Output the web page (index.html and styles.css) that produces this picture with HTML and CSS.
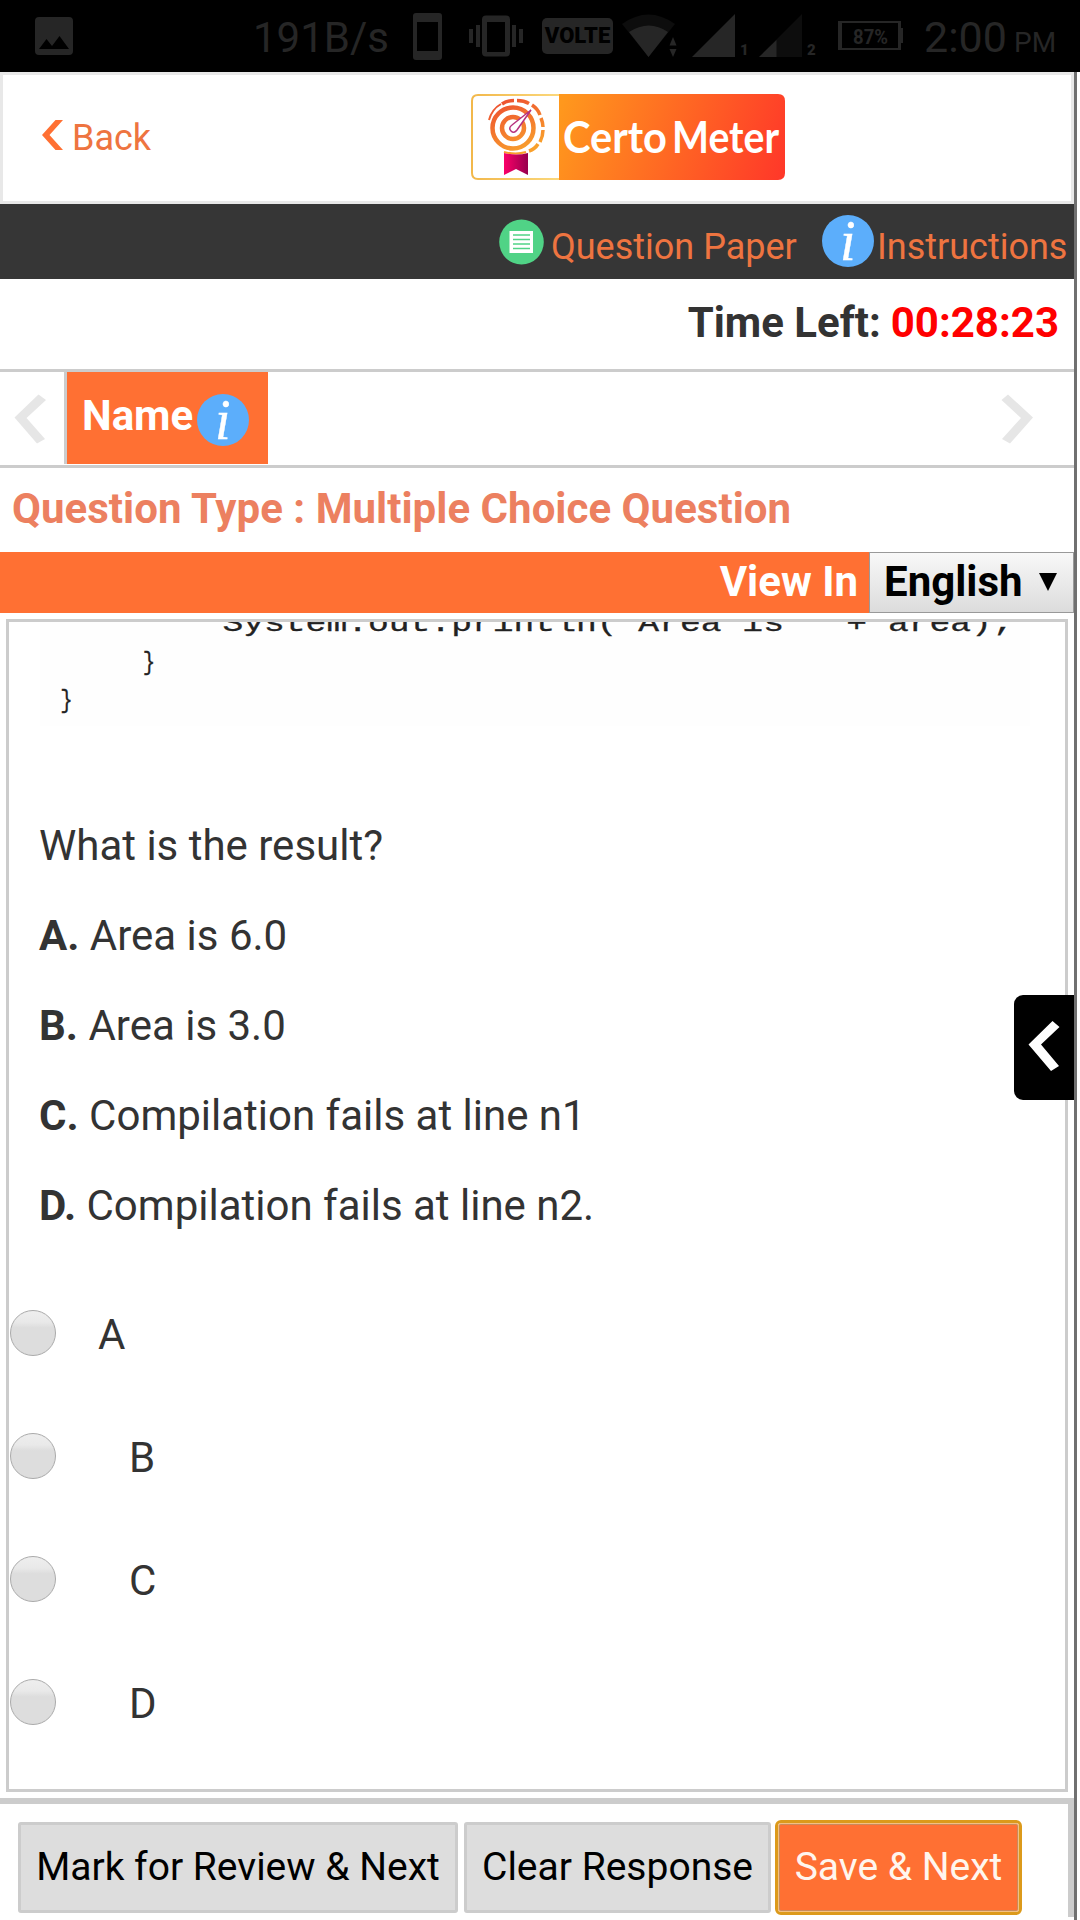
FILE: index.html
```html
<!DOCTYPE html>
<html lang="en">
<head>
<meta charset="utf-8">
<title>Certo Meter</title>
<link rel="stylesheet" href="styles.css">
</head>
<body>
<div class="status">
  <svg class="st-image" width="38" height="38" viewBox="35 17 38 38"><path fill="#262626" fill-rule="evenodd" d="M39 17h30q4 0 4 4v30q0 4-4 4H39q-4 0-4-4V21q0-4 4-4zM39 49h30L59.500 36l-7.500 10-5.500-7z"/></svg>
  <span class="st-speed">191B/s</span>
  <svg class="st-phone" width="30" height="48" viewBox="413 13 30 48"><path fill="#262626" fill-rule="evenodd" d="M416 13h23q3 0 3 3v41q0 3-3 3h-23q-3 0-3-3V16q0-3 3-3zM417 22v29h21V22z"/></svg>
  <svg class="st-vibrate" width="54" height="42" viewBox="469 15 54 42"><path fill="#262626" fill-rule="evenodd" d="M486 15.500h20q4 0 4 4v33q0 4-4 4h-20q-4 0-4-4v-33q0-4 4-4zM487 22v30h18V22zM469 29h4v14h-4zM476 25h4v22h-4zM512 25h4v22h-4zM519 29h4v14h-4z"/></svg>
  <span class="st-volte">VOLTE</span>
  <svg class="st-wifi" width="55" height="44" viewBox="622 14 55 44"><path fill="#0d0d0d" d="M622 24q26.500-19 53 0l-26.500 33z"/><path fill="#262626" d="M629 32q20-13 39 0l-19.500 25zM673 37l3.500 8.500h-7zM673 57l3.500-8h-7z"/></svg>
  <svg class="st-sig" width="43" height="44" viewBox="692 14 43 44"><path fill="#262626" d="M692 57L735 14v43z"/></svg>
  <span class="st-sim">1</span>
  <svg class="st-sig second" width="43" height="44" viewBox="759 14 43 44"><path fill="#0d0d0d" d="M759 57L802 14v43z"/><path fill="#262626" d="M759 57l17.500-17v17z"/></svg>
  <span class="st-sim">2</span>
  <svg class="st-battery" width="66" height="30" viewBox="838 21 66 30"><path fill="none" stroke="#262626" stroke-width="2" d="M839 22h61v27h-61z"/><path fill="#262626" d="M839 22h3v27h-3zM898 22h3v27h-3zM901 28h2v15h-2z"/><text x="853" y="44" font-size="21" textLength="35" lengthAdjust="spacingAndGlyphs" class="level">87%</text></svg>
  <span class="st-time">2:00</span><span class="st-pm">PM</span>
</div>
<div class="page">
  <header class="header">
    <a class="back"><svg width="22" height="32" viewBox="42 120 22 32"><path fill="#ff7033" d="M42 135l13.500-15H63L49.500 135 63 150h-7.500z"/></svg><span>Back</span></a>
    <svg class="logo" width="314" height="86" viewBox="471 94 314 86">
      <defs>
        <linearGradient id="brand" gradientUnits="userSpaceOnUse" x1="559" y1="110" x2="780" y2="185"><stop offset="0" stop-color="#ff981d"/><stop offset="1" stop-color="#ff3829"/></linearGradient>
        <linearGradient id="edge" x1="0" y1="0" x2="1" y2="0"><stop offset="0" stop-color="#f2b84b"/><stop offset="1" stop-color="#fbd87c"/></linearGradient>
        <linearGradient id="ring" gradientUnits="userSpaceOnUse" x1="500" y1="105" x2="522" y2="152"><stop offset="0" stop-color="#ee5530"/><stop offset="1" stop-color="#f9a02c"/></linearGradient>
        <linearGradient id="ribbon"><stop offset="0" stop-color="#fb0068"/><stop offset="1" stop-color="#97004e"/></linearGradient>
      </defs>
      <path fill="#fff" stroke="url(#edge)" stroke-width="2" d="M560 95h-82q-6 0-6 6v72q0 6 6 6h82z"/>
      <path fill="url(#brand)" d="M559 94h219q7 0 7 7v72q0 7-7 7H559z"/>
      <g fill="none" stroke="url(#ring)">
        <circle cx="513" cy="128" r="20.500" stroke-width="4.500"/>
        <circle cx="513" cy="128" r="11" stroke-width="4.500"/>
        <path stroke-width="2" d="M489 120q3-11 12-16"/>
        <path stroke-width="3.500" d="M502 104q5-3.500 12-3.500M517 100.500q7 0 12 3M532 105q6 4 8 10M541 118q2 5 2 9M543 130q0 6-3 12M538 144q-3 5-9 7"/>
        <path stroke-width="2" d="M526 152q-10 3-22 0"/>
      </g>
      <path fill="#fff" stroke="#b6327f" stroke-width="1.500" d="M531 110l-14 20q-3 4-6 1t1-6z"/>
      <path fill="url(#ribbon)" d="M504 153q12 3 24 0v22l-12-6-12 6z"/>
      <g class="wordmark"><text x="563" y="153" textLength="104" lengthAdjust="spacingAndGlyphs">Certo</text><text x="672" y="153" textLength="107" lengthAdjust="spacingAndGlyphs">Meter</text></g>
    </svg>
  </header>
  <nav class="toolbar">
    <svg class="paper-icon" width="45" height="46" viewBox="0 0 45 46"><ellipse cx="22.500" cy="23" rx="22.300" ry="22.500" fill="#50d386"/><path fill="#fff" d="M10.500 12H34v22H10.500z"/><path stroke="#50d386" stroke-width="1.700" d="M14 16h17M14 20.500h17M14 25h17M14 29.500h17"/></svg>
    <span class="paper-label">Question Paper</span>
    <svg class="info" width="52" height="52" viewBox="0 0 52 52"><circle cx="26" cy="26" r="26"/><text x="18" y="45">i</text></svg>
    <span class="instr-label">Instructions</span>
  </nav>
  <div class="timer"><span class="timer-label">Time Left:</span><span class="timer-value">00:28:23</span></div>
  <div class="tabs">
    <div class="prev"><svg width="32" height="50" viewBox="14 393.500 32 50"><path fill="#e6e6e6" d="M14.500 417L38.500 394l7.500 5.500-19.500 18 18.500 21-8 4.500z"/></svg></div>
    <div class="tab"><span>Name</span><svg class="info" width="52" height="52" viewBox="0 0 52 52"><circle cx="26" cy="26" r="26"/><text x="18" y="45">i</text></svg></div>
    <div class="next"><svg width="32" height="50" viewBox="1001 393.500 32 50"><path fill="#e6e6e6" d="M1033 417l-25-23-6.500 5.500 19.500 18-19 21 8 4.500z"/></svg></div>
  </div>
  <div class="qtype">Question Type : Multiple Choice Question</div>
  <div class="viewbar"><span class="view-label">View In</span><div class="select"><span>English</span><svg width="18" height="18" viewBox="0 0 18 18"><path d="M0 0h18L9 18z"/></svg></div></div>
  <main class="question">
    <div class="code"><pre>        System.out.println("Area is " + area);
    <span class="brace">}</span>
<span class="brace">}</span></pre></div>
    <div class="text">
      <p>What is the result?</p>
      <p><b>A.</b> Area is 6.0</p>
      <p><b>B.</b> Area is 3.0</p>
      <p><b>C.</b> Compilation fails at line n1</p>
      <p><b>D.</b> Compilation fails at line n2.</p>
    </div>
    <div class="options">
      <label class="option first"><i class="radio"></i><span>A</span></label>
      <label class="option"><i class="radio"></i><span>B</span></label>
      <label class="option"><i class="radio"></i><span>C</span></label>
      <label class="option"><i class="radio"></i><span>D</span></label>
    </div>
  </main>
  <footer class="footer">
    <div class="btn mark"><span>Mark for Review &amp; Next</span></div>
    <div class="btn clear"><span>Clear Response</span></div>
    <div class="btn save"><span>Save &amp; Next</span></div>
  </footer>
  <div class="drawer"><svg width="32" height="50" viewBox="0 0 32 50"><path fill="#fff" d="M.500 23.500L24.500 0l7 6-18.500 17.500 18 21.500-8 5z"/></svg></div>
</div>
</body>
</html>
```
FILE: styles.css
```css
* { box-sizing: border-box; }
body { margin: 0; width: 1080px; height: 1920px; overflow: hidden; background: #fff; font-family: Roboto, "Liberation Sans", sans-serif; font-size: 42px; color: #333; position: relative; }
svg { display: block; flex: none; overflow: visible; }
span { white-space: pre; }

/* Status bar */
.status { height: 72px; background: #000; color: #262626; display: flex; align-items: flex-start; }
.status > * { flex: none; }
.st-image { margin: 17px 0 0 35px; }
.st-speed { margin-left: 180px; width: 160px; font-size: 42px; line-height: 75px; }
.st-phone { margin: 13px 26px 0 0; }
.st-vibrate { margin-top: 15px; }
.st-volte { margin: 18px 0 0 19px; width: 71px; height: 36px; border-radius: 5px; background: #262626; color: #000; font-size: 22px; font-weight: 900; line-height: 36px; text-align: center; }
.st-wifi { margin: 14px 0 0 9px; }
.st-sig { margin: 14px 0 0 15px; }
.st-sig.second { margin-left: 9px; }
.st-sim { width: 10px; margin: 40px 0 0 5px; font-size: 15px; line-height: 20px; font-weight: 900; }
.st-battery { margin: 21px 0 0 21px; }
.level { fill: #262626; font-weight: 700; }
.st-time { margin-left: 20px; width: 90px; font-size: 43px; line-height: 74px; }
.st-pm { font-size: 28px; line-height: 85px; }

.page { width: 1077px; height: 1848px; border-right: 3px solid #707070; }

/* Header */
.header { height: 132px; border: 3px solid #e8e8e8; display: flex; align-items: flex-start; }
.back { display: flex; width: 468px; padding: 45px 0 0 39px; color: #ee7440; font-size: 36px; line-height: 42px; }
.back span { margin: -3px 0 0 8px; }
.logo { margin-top: 19px; }
.wordmark { fill: #fff; font-family: Lato, sans-serif; font-weight: 700; font-size: 43px; }

.toolbar { height: 75px; background: #363636; display: flex; align-items: flex-start; color: #ee7440; font-size: 36px; line-height: 86px; }
.paper-icon { margin: 15px 0 0 499px; }
.paper-label { margin-left: 7px; width: 271px; }
.toolbar .info { margin-top: 11px; }
.instr-label { margin-left: 3px; }
.info circle { fill: #5caefb; }
.info text { fill: #fff; stroke: #fff; stroke-width: .4; font: italic 56px "Liberation Serif", serif; }

.timer { height: 93px; border-bottom: 3px solid #ccc; padding-right: 15px; display: flex; justify-content: flex-end; font-weight: 700; line-height: 88px; }
.timer-value { color: #f00; margin-left: 10px; }

.tabs { height: 96px; border-bottom: 3px solid #ccc; display: flex; }
.prev { width: 67px; height: 92px; padding: 22px 0 0 14px; border-right: 3px solid #ccc; }
.tab { width: 201px; height: 92px; background: #ff7033; color: #fff; display: flex; padding-left: 15px; font-weight: 700; line-height: 87px; }
.tab span { width: 115px; }
.tab .info { margin-top: 22px; }
.next { margin-left: auto; padding: 22px 41px 0 0; }

.qtype { height: 84px; padding-left: 12px; color: #ec8060; font-weight: 700; line-height: 82px; letter-spacing: .03px; white-space: pre; }
.viewbar { height: 61px; background: #ff7033; color: #fff; display: flex; justify-content: flex-end; font-weight: 700; line-height: 60px; }
.view-label { margin-right: 11px; }
.select { width: 205px; border: 1px solid #999; background: linear-gradient(#f8f8f8, #dcdcdc); color: #000; display: flex; line-height: 58px; padding-left: 14px; }
.select span { width: 155px; }
.select svg { margin-top: 20px; }

/* Question panel */
.question { margin: 6px 6px 0; height: 1173px; border: 3px solid #ccc; overflow: hidden; }
.code { margin-left: 31px; width: 990px; height: 104px; background: #fefefe; overflow: hidden; }
.code pre { margin: -17px 0 0 16px; width: 760px; font-family: "Liberation Mono", monospace; font-size: 26px; line-height: 38.500px; color: #222; -webkit-text-stroke: .3px #222; transform: scaleX(1.333); transform-origin: 0 0; }
.brace { display: inline-block; transform: scaleX(.6); }
.text { padding: 75px 0 0 30px; }
.text p { margin: 0; height: 90px; line-height: 90px; white-space: pre; }
.options { padding-top: 43px; }
.option { display: flex; height: 123px; padding: 16px 0 0 1px; line-height: 49px; }
.radio { width: 46px; height: 46px; border-radius: 50%; border: 1px solid #aaa; background: linear-gradient(#eee, #e9e9e9 25%, #ddd 38%, #ddd); }
.option span { margin-left: 73px; }
.option.first span { margin-left: 42px; }

/* Footer */
.footer { margin-top: 6px; height: 119px; border-top: 6px solid #ccc; border-right: 6px solid #ccc; display: flex; padding: 18px 0 0 18px; font-size: 39px; color: #000; }
.btn { height: 91px; border: 3px solid #ccc; border-radius: 3px; background: #ddd; line-height: 85px; text-align: center; flex: none; }
.mark { width: 440px; margin-right: 6px; }
.clear { width: 307px; margin-right: 7px; }
.save { width: 241px; height: 89px; margin-top: 1px; border: 1px solid #f3c083; background: #ff7033; box-shadow: inset 0 0 0 1px #c98a5c; outline: 3px solid #dc9a1b; color: #fff6ee; line-height: 87px; }

/* Palette drawer handle, floating over the panel edge */
.drawer { position: absolute; left: 1014px; top: 995px; width: 60px; height: 105px; border-radius: 9px 0 0 9px; background: #000; padding: 26px 0 0 14px; }
```
